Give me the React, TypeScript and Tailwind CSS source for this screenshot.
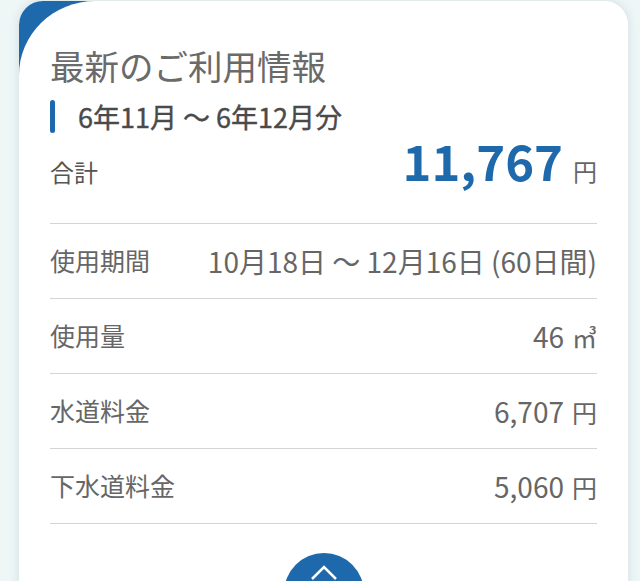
const font = {
  fontFamily: '"Noto Sans CJK JP", "Noto Sans", sans-serif',
};

type Row = { label: string; value: string; unit?: string };

const rows: Row[] = [
  { label: "使用期間", value: "10月18日 ～ 12月16日 (60日間)" },
  { label: "使用量", value: "46", unit: "㎥" },
  { label: "水道料金", value: "6,707", unit: "円" },
  { label: "下水道料金", value: "5,060", unit: "円" },
];

const App = () => {
  return (
    <div
      className="h-[581px] overflow-hidden bg-[#eef6f6] pt-[1px]"
      style={font}
    >
      <div className="relative ml-[19px] h-[640px] w-[609px] overflow-hidden rounded-[24px] bg-white shadow-[0_0_10px_rgba(120,150,150,0.25)]">
        {/* blue corner decoration */}
        <div className="absolute left-0 top-0 h-[90px] w-[110px] bg-[#1d69ac]" />
        <div className="relative h-full rounded-tl-[76px_74px] bg-white px-[31px] pt-[40px]">
          <h1 className="text-[34.5px] leading-[48px] text-[#6a6a6a]">
            最新のご利用情報
          </h1>
          <div className="mt-[11px] flex items-center">
            <span className="h-[33px] w-[5px] rounded-full bg-[#1d69ac]" />
            <span className="ml-[23px] text-[27px] leading-[33px] text-[#4a4a4a] [-webkit-text-stroke:0.4px_#4a4a4a]">
              6年11月 ～ 6年12月分
            </span>
          </div>
          <div className="flex h-[91px] items-end justify-between border-b border-[#d4d4d4] pb-[34px]">
            <span className="pb-[2px] text-[24px] leading-[30px] text-[#555]">
              合計
            </span>
            <div className="flex items-baseline">
              <span className="text-[49px] font-bold leading-[49px] text-[#1d69ac]">
                11,767
              </span>
              <span className="ml-[10px] text-[24px] text-[#666]">円</span>
            </div>
          </div>
          {rows.map((row) => (
            <div
              key={row.label}
              className="flex h-[75px] items-center justify-between border-b border-[#d4d4d4] text-[#666]"
            >
              <span className="text-[25px]">{row.label}</span>
              <span className="text-[28px]">
                {row.value}
                {row.unit && (
                  <span className="ml-[8px] text-[25px]">{row.unit}</span>
                )}
              </span>
            </div>
          ))}
          <div className="mt-[29px] flex justify-center">
            <button className="flex h-[80px] w-[80px] items-start justify-center rounded-full bg-[#1d69ac] pt-[10px]">
              <svg
                width="30"
                height="18"
                viewBox="0 0 30 18"
                fill="none"
                stroke="white"
                strokeWidth="2.5"
              >
                <path d="M3 16 L15 4 L27 16" />
              </svg>
            </button>
          </div>
        </div>
      </div>
    </div>
  );
};

export default App;
